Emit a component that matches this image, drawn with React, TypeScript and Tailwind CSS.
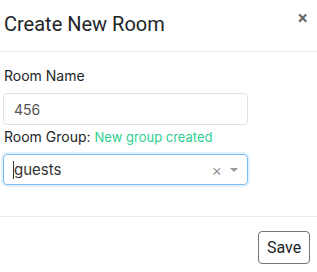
import React from 'react';

const App: React.FC = () => {
  return (
    <div className="w-[317px] h-[272px] bg-white overflow-hidden">
      <div className="flex items-start justify-between h-[52px] border-b border-[#e9ecef] pl-[4px] pr-[9px]">
        <h5 className="mt-[12px] text-[20px] leading-[24px] text-[#212529] font-['Roboto',sans-serif]">
          Create New Room
        </h5>
        <button className="mt-[9px] text-[#666] text-[19px] leading-[18px] font-bold font-['Liberation Sans',sans-serif]">
          ×
        </button>
      </div>

      <div className="h-[164px] pl-[3px] pt-[15px] font-['Inter',sans-serif]">
        <label className="block pl-[1px] text-[14px] leading-[18px] text-[#212529]">Room Name</label>
        <input
          readOnly
          value="456"
          className="mt-[8px] w-[245px] h-[32px] px-[10px] border border-[#dee2e6] rounded-[4px] text-[14px] text-[#555] outline-none"
        />
        <div className="mt-[3px] pl-[1px] flex items-baseline gap-[4px] leading-[18px]">
          <span className="text-[14px] text-[#212529]">Room Group:</span>
          <span className="text-[13px] text-[#2fd08f]">New group created</span>
        </div>
        <div className="mt-[8px] w-[245px] h-[31px] flex items-center border border-[#7cbcf0] rounded-[4px] shadow-[0_0_0_2px_#e3f1fc] pl-[9px] pr-[9px]">
          <span className="w-px h-[18px] bg-[#333]" />
          <span className="flex-1 text-[15px] leading-[18px] text-[#333]">guests</span>
          <span className="text-[#999] text-[16px] leading-[16px] font-['Liberation Sans',sans-serif] mr-[8px]">×</span>
          <span className="w-0 h-0 border-l-[4px] border-r-[4px] border-t-[4px] border-l-transparent border-r-transparent border-t-[#999]" />
        </div>
      </div>

      <div className="border-t border-[#e9ecef] flex justify-end pt-[14px] pr-[7px]">
        <button className="w-[52px] h-[33px] border border-[#6c757d] rounded-[4px] text-[16px] text-[#212529] font-['Roboto',sans-serif]">
          Save
        </button>
      </div>
    </div>
  );
};

export default App;
